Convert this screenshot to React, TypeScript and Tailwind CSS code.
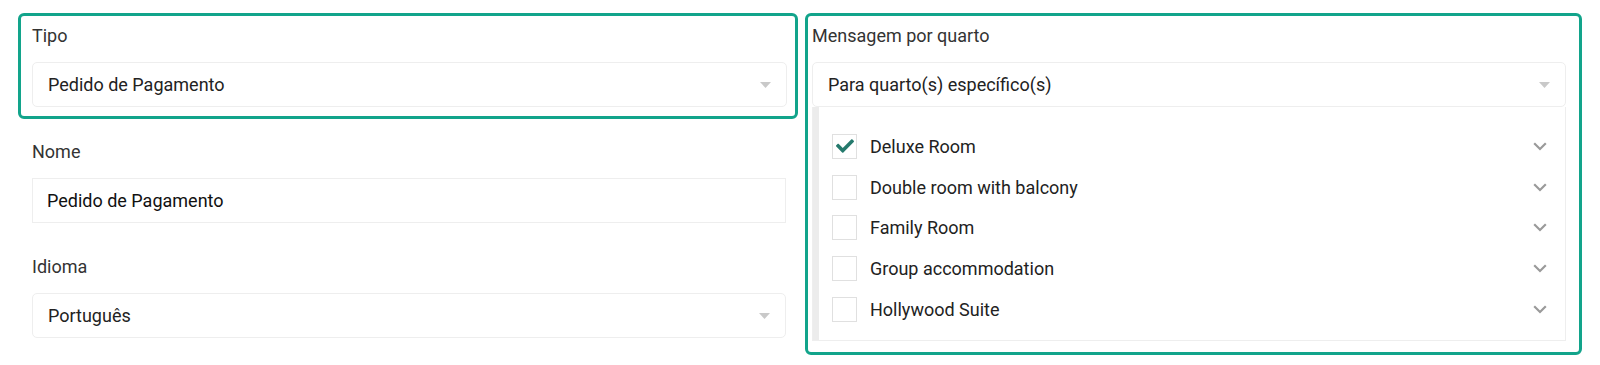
import { FaCheck } from 'react-icons/fa'

const ROOMS = [
  { name: 'Deluxe Room', checked: true },
  { name: 'Double room with balcony', checked: false },
  { name: 'Family Room', checked: false },
  { name: 'Group accommodation', checked: false },
  { name: 'Hollywood Suite', checked: false },
]

function Caret() {
  return (
    <svg width="11" height="6" viewBox="0 0 11 6" aria-hidden>
      <path d="M0 0 L11 0 L5.5 6 Z" fill="#c9c9c9" />
    </svg>
  )
}

function Chevron() {
  return (
    <svg width="14" height="9" viewBox="0 0 14 9" aria-hidden>
      <path d="M1.2 1.2 L7 7 L12.8 1.2" fill="none" stroke="#9a9a9a" strokeWidth="2.2" />
    </svg>
  )
}

function SelectBox({ value }: { value: string }) {
  return (
    <div className="flex h-[45px] items-center justify-between rounded-[5px] border border-[#eeeeee] bg-white pl-[15px] pr-[15px]">
      <span className="text-[18px] text-[#222]">{value}</span>
      <Caret />
    </div>
  )
}

function Label({ children }: { children: string }) {
  return <div className="flex h-[20px] items-center text-[18px] leading-[20px] text-[#333]">{children}</div>
}

function Checkbox({ checked }: { checked: boolean }) {
  return (
    <div className="flex h-[25px] w-[25px] items-center justify-center border border-[#e0e0e0] bg-white">
      {checked && <FaCheck size={18} color="#257a6d" />}
    </div>
  )
}

export default function App() {
  return (
    <div className="flex h-[365px] w-[1600px] gap-[7px] bg-white pl-[18px] pt-[13px] font-['Roboto',sans-serif]">
      {/* coluna esquerda */}
      <div className="flex w-[780px] flex-col">
        <div className="flex flex-col gap-[16px] rounded-[6px] border-[3px] border-[#12a48b] pb-[9px] pl-[11px] pr-[8px] pt-[10px]">
          <Label>Tipo</Label>
          <SelectBox value="Pedido de Pagamento" />
        </div>
        <div className="flex flex-col pl-[14px] pr-[12px] pt-[23px]">
          <Label>Nome</Label>
          <div className="mt-[16px] flex h-[45px] items-center border border-[#eeeeee] bg-white pl-[14px]">
            <span className="text-[18px] text-[#111]">Pedido de Pagamento</span>
          </div>
          <div className="mt-[34px]">
            <Label>Idioma</Label>
          </div>
          <div className="mt-[16px]">
            <SelectBox value="Português" />
          </div>
        </div>
      </div>

      {/* coluna direita */}
      <div className="flex h-[342px] w-[777px] flex-col rounded-[6px] border-[3px] border-[#12a48b] pl-[4px] pr-[13px] pt-[10px]">
        <Label>Mensagem por quarto</Label>
        <div className="mt-[16px]">
          <SelectBox value="Para quarto(s) específico(s)" />
        </div>
        <div className="flex h-[234px] border border-t-0 border-[#eeeeee] bg-white">
          <div className="w-[6px] bg-[#ececec]" />
          <div className="flex flex-1 flex-col pb-[10px] pl-[13px] pr-[18px] pt-[19px]">
            {ROOMS.map((room) => (
              <div key={room.name} className="flex h-[40.75px] items-center">
                <Checkbox checked={room.checked} />
                <span className="ml-[13px] flex-1 text-[18px] text-[#222]">{room.name}</span>
                <Chevron />
              </div>
            ))}
          </div>
        </div>
      </div>
    </div>
  )
}
